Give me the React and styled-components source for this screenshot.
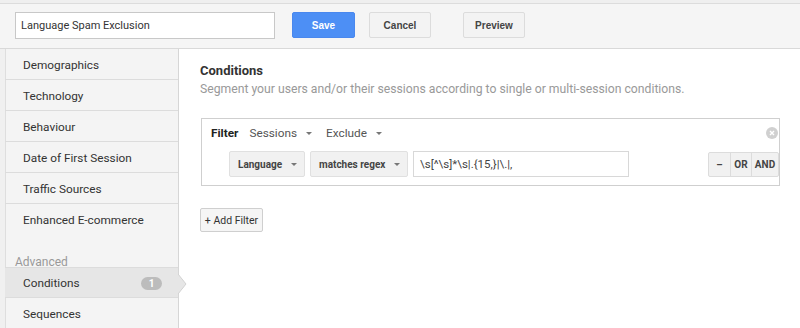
import React from "react";
import styled, { createGlobalStyle } from "styled-components";

const Global = createGlobalStyle`
  html, body { margin: 0; padding: 0; background: #fff; }
  body { font-family: Roboto, "Liberation Sans", Arial, sans-serif; color: #333; }
  * { box-sizing: border-box; }
`;

const Page = styled.div`
  width: 800px;
  height: 328px;
  overflow: hidden;
  display: flex;
  flex-direction: column;
`;

const TopStrip = styled.div`
  height: 4px;
  flex: none;
  background: #efefef;
  border-bottom: 1px solid #dcdcdc;
`;

const TopBar = styled.div`
  height: 45px;
  flex: none;
  background: #f5f5f5;
  border-bottom: 1px solid #d9d9d9;
  display: flex;
  align-items: flex-start;
  padding: 8px 0 0 15px;
`;

const NameInput = styled.div`
  width: 260px;
  height: 27px;
  background: #fff;
  border: 1px solid #c8c8c8;
  font-size: 11px;
  color: #333;
  display: flex;
  align-items: center;
  padding-left: 5px;
  margin-right: 17px;
`;

const Btn = styled.div`
  width: ${(p) => p.$w || 62}px;
  height: 26px;
  margin-left: ${(p) => p.$ml || 0}px;
  border-radius: 2px;
  display: flex;
  align-items: center;
  justify-content: center;
  font-family: "Liberation Sans", Arial, sans-serif;
  font-weight: bold;
  font-size: 10px;
  background: ${(p) => (p.$primary ? "#4d8ff5" : "#f3f3f3")};
  color: ${(p) => (p.$primary ? "#fff" : "#444")};
  border: 1px solid ${(p) => (p.$primary ? "#4a88ee" : "#dcdcdc")};
`;

const Main = styled.div`
  flex: 1;
  display: flex;
  min-height: 0;
`;

const Sidebar = styled.div`
  width: 181px;
  background: #f4f4f4;
  border-left: 5px solid #f0f0f0;
  border-right: 1px solid #d6d6d6;
  display: flex;
  flex-direction: column;
  position: relative;
  box-shadow: inset 1px 0 0 #dedede;
`;

const Item = styled.div`
  height: 31px;
  flex: none;
  display: flex;
  align-items: center;
  justify-content: space-between;
  padding: 1px 17px 0 18px;
  font-size: 11.8px;
  color: #333;
  border-bottom: 1px solid ${(p) => (p.$noBorder ? "transparent" : "#dcdcdc")};
  border-top: ${(p) => (p.$topBorder ? "1px solid #dcdcdc" : "none")};
  background: ${(p) => (p.$active ? "#e6e6e6" : "transparent")};
  position: relative;
`;

const Spacer = styled.div`
  height: 19px;
  flex: none;
`;

const SectionLabel = styled.div`
  height: 13px;
  flex: none;
  font-size: 12px;
  color: #999;
  margin-left: -5px;
  padding-left: 15px;
  display: flex;
  align-items: center;
  line-height: 13px;
  padding-top: 3px;
`;

const Badge = styled.span`
  width: 21px;
  height: 13px;
  border-radius: 7px;
  background: #bcbcbc;
  color: #fff;
  font-size: 10px;
  font-weight: bold;
  display: flex;
  align-items: center;
  justify-content: center;
  margin-right: -1px;
`;

const Arrow = styled.svg`
  position: absolute;
  right: -10px;
  top: 6px;
`;

const Content = styled.div`
  flex: 1;
  padding: 13px 20px 0 21px;
`;

const Title = styled.div`
  font-size: 13px;
  font-weight: bold;
  color: #333;
  line-height: 18px;
`;

const Subtitle = styled.div`
  font-size: 12.2px;
  color: #999;
  margin-top: 1px;
  line-height: 17px;
`;

const FilterBox = styled.div`
  margin-top: 20px;
  margin-left: 1px;
  width: 579px;
  height: 68px;
  border: 1px solid #cfcfcf;
  padding: 5px 0 0 9px;
  position: relative;
`;

const FilterRow = styled.div`
  display: flex;
  align-items: center;
  height: 18px;
  font-size: 11.8px;
`;

const FilterLabel = styled.span`
  font-weight: bold;
  color: #222;
  margin-right: 11px;
`;

const Dropdown = styled.span`
  display: flex;
  align-items: center;
  color: #555;
  margin-right: 14px;
`;

const Caret = styled.span`
  width: 0;
  height: 0;
  border-left: 3px solid transparent;
  border-right: 3px solid transparent;
  border-top: 3px solid #777;
  margin-left: ${(p) => p.$ml || 9}px;
`;

const CloseIcon = styled.svg`
  position: absolute;
  right: 1px;
  top: 8px;
`;

const CondRow = styled.div`
  display: flex;
  align-items: center;
  margin-top: 9px;
  padding-left: 18px;
`;

const Select = styled.div`
  width: ${(p) => p.$w}px;
  height: 26px;
  margin-right: 5px;
  background: #f1f1f1;
  border: 1px solid #e0e0e0;
  border-radius: 2px;
  display: flex;
  align-items: center;
  justify-content: space-between;
  padding: 0 7px 0 8px;
  font-size: 10px;
  font-weight: bold;
  color: #444;
  white-space: nowrap;
`;

const ValueInput = styled.div`
  width: 216px;
  height: 26px;
  border: 1px solid #d8d8d8;
  background: #fff;
  display: flex;
  align-items: center;
  padding-left: 6px;
  font-size: 11.5px;
  color: #444;
`;

const BtnGroup = styled.div`
  display: flex;
  margin-left: 79px;
  height: 25px;
  border: 1px solid #dcdcdc;
  border-radius: 2px;
  background: #f1f1f1;
`;

const GroupBtn = styled.div`
  width: ${(p) => p.$w}px;
  display: flex;
  align-items: center;
  justify-content: center;
  font-size: 10px;
  font-weight: bold;
  color: #444;
  border-left: ${(p) => (p.$first ? "none" : "1px solid #dcdcdc")};
`;

const AddFilter = styled.div`
  margin-top: 22px;
  width: 63px;
  height: 24px;
  border: 1px solid #cfcfcf;
  border-radius: 2px;
  background: #f5f5f5;
  font-size: 10.5px;
  color: #333;
  display: flex;
  align-items: center;
  justify-content: center;
`;

const items = [
  "Demographics",
  "Technology",
  "Behaviour",
  "Date of First Session",
  "Traffic Sources",
  "Enhanced E-commerce",
];

export default function App() {
  return (
    <Page>
      <Global />
      <TopStrip />
      <TopBar>
        <NameInput>Language Spam Exclusion</NameInput>
        <Btn $primary $w={63}>Save</Btn>
        <Btn $ml={14}>Cancel</Btn>
        <Btn $ml={32}>Preview</Btn>
      </TopBar>
      <Main>
        <Sidebar>
          {items.map((t, i) => (
            <Item key={t} $noBorder={i === items.length - 1}>{t}</Item>
          ))}
          <Spacer />
          <SectionLabel>Advanced</SectionLabel>
          <Item $active $topBorder>
            Conditions
            <Badge>1</Badge>
            <Arrow width="10" height="20" viewBox="0 0 10 20">
              <polygon points="0,0 8,10 0,20" fill="#e6e6e6" />
              <polyline points="0,0 8,10 0,20" fill="none" stroke="#d2d2d2" strokeWidth="1" />
            </Arrow>
          </Item>
          <Item>Sequences</Item>
        </Sidebar>
        <Content>
          <Title>Conditions</Title>
          <Subtitle>Segment your users and/or their sessions according to single or multi-session conditions.</Subtitle>
          <FilterBox>
            <FilterRow>
              <FilterLabel>Filter</FilterLabel>
              <Dropdown>Sessions<Caret /></Dropdown>
              <Dropdown>Exclude<Caret /></Dropdown>
            </FilterRow>
            <CloseIcon width="12" height="12" viewBox="0 0 12 12">
              <circle cx="6" cy="6" r="6" fill="#d0d0d0" />
              <path d="M4 4 L8 8 M8 4 L4 8" stroke="#fff" strokeWidth="1.4" />
            </CloseIcon>
            <CondRow>
              <Select $w={76}>Language<Caret $ml={0} /></Select>
              <Select $w={98}>matches regex<Caret $ml={0} /></Select>
              <ValueInput>{"\\s[^\\s]*\\s|.{15,}|\\.|,"}</ValueInput>
              <BtnGroup>
                <GroupBtn $first $w={21}>–</GroupBtn>
                <GroupBtn $w={21}>OR</GroupBtn>
                <GroupBtn $w={27}>AND</GroupBtn>
              </BtnGroup>
            </CondRow>
          </FilterBox>
          <AddFilter>+ Add Filter</AddFilter>
        </Content>
      </Main>
    </Page>
  );
}
